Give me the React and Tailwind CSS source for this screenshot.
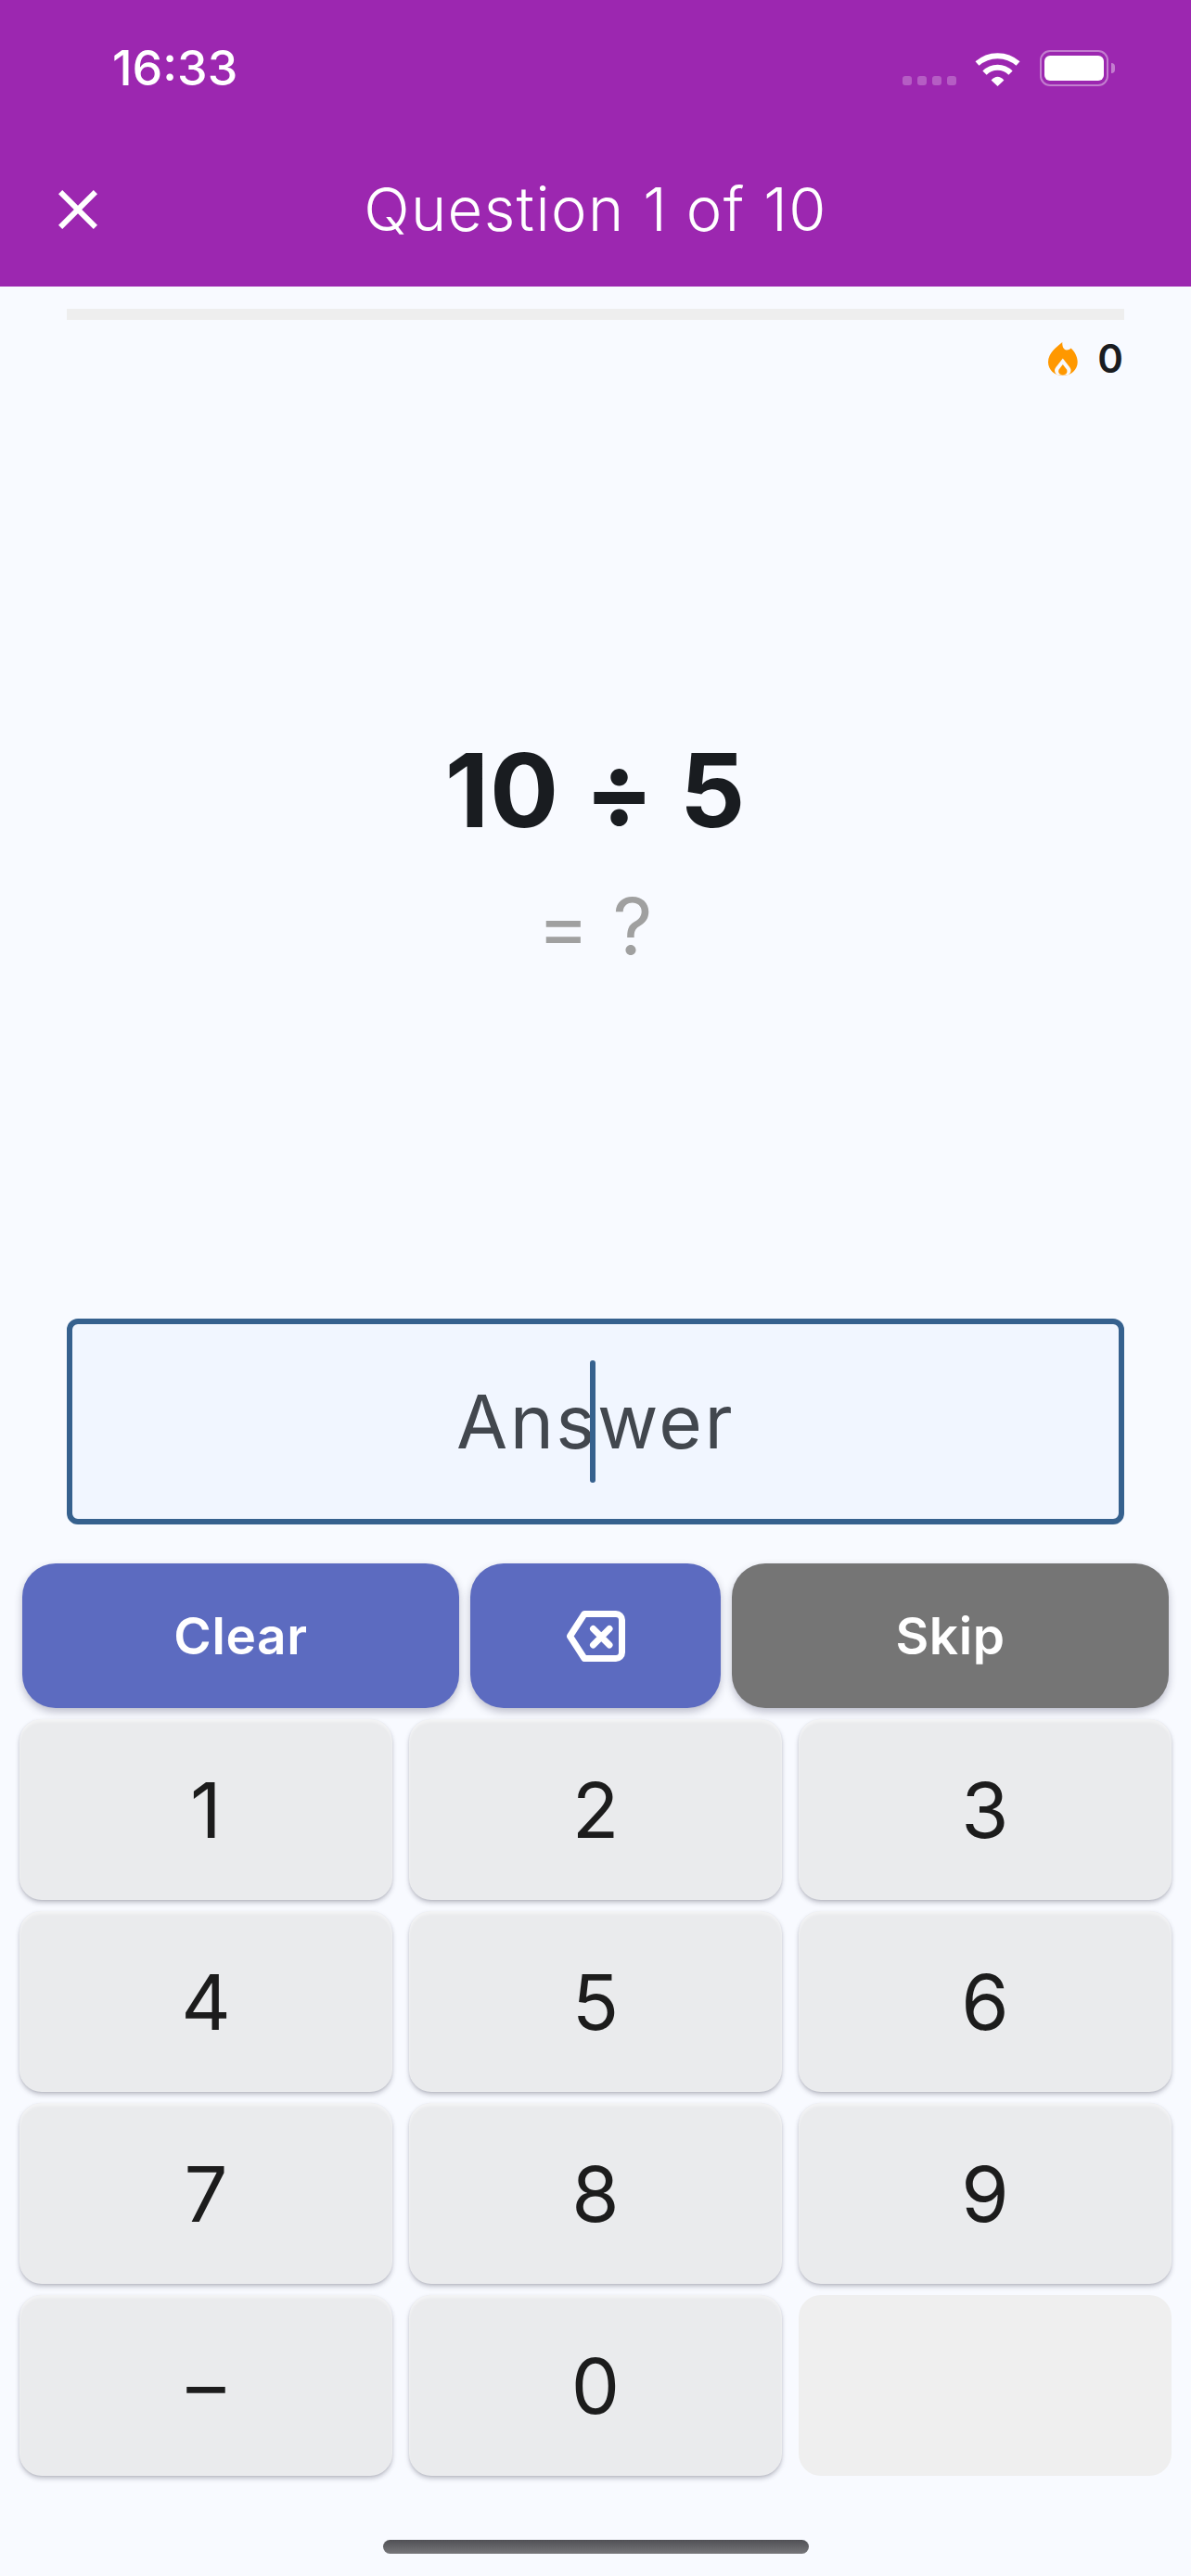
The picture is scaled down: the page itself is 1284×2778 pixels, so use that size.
const font = "font-['Inter',sans-serif]";

function CloseIcon() {
  return (
    <svg width="42" height="42" viewBox="0 0 42 42" fill="#fff">
      <path d="M42 4.2 37.8 0 21 16.8 4.2 0 0 4.2 16.8 21 0 37.8 4.2 42 21 25.2 37.8 42 42 37.8 25.2 21Z" />
    </svg>
  );
}

function WifiIcon() {
  return (
    <svg width="49" height="36" viewBox="0 0 49 36" fill="none" stroke="#fff" strokeWidth="6">
      <path d="M2.5 11.6A33 33 0 0 1 46.5 11.6" />
      <path d="M10.5 21.6A19.5 19.5 0 0 1 38.5 21.6" />
      <path d="M17.6 29.5Q24.5 22 31.4 29.5L24.5 36Z" fill="#fff" stroke="none" />
    </svg>
  );
}

function FlameIcon() {
  return (
    <svg width="32" height="36" viewBox="0 0 32 36">
      <path
        d="M15.3 0C15 3 16 8.5 20 8.5 22 8.5 23.5 7.5 24.5 6.5 29 10.5 31.7 16 31.7 21.5 31.7 30 24.5 36 15.8 36 7 36 0 30 0 21.5 0 12 9 5 15.3 0Z"
        fill="#FF9800"
      />
      <path
        d="M15.8 17.5 23.2 27C25.6 30.2 24.5 33.2 21.5 35.5L10 35.5C7 33.2 6 30.2 8.4 27Z"
        fill="#F8FAFF"
      />
      <path
        d="M15.8 24 19.8 29.2C21.6 32.2 19.5 35.2 15.8 35.2 12.1 35.2 10 32.2 11.8 29.2Z"
        fill="#FF9800"
      />
    </svg>
  );
}

function BackspaceIcon() {
  return (
    <svg width="63" height="55" viewBox="0 0 63 55" fill="none" stroke="#fff" strokeWidth="7" strokeLinecap="round" strokeLinejoin="round">
      <path d="M19 3.5H53A6.5 6.5 0 0 1 59.5 10V45A6.5 6.5 0 0 1 53 51.5H19L3.5 27.5Z" />
      <path d="M28.5 19.5 46 37M46 19.5 28.5 37" />
    </svg>
  );
}

function Key({ label, disabled }) {
  if (disabled) {
    return <div className="h-[195px] rounded-[24px] bg-[#EFEFEF]" />;
  }
  return (
    <div className="flex h-[195px] items-center justify-center rounded-[24px] bg-[#EAEBED] pt-[2px] text-[83px] leading-none text-[#1C1C1C] shadow-[0_3px_5px_rgba(60,60,80,0.28),0_1px_2px_rgba(60,60,80,0.1),inset_0_3px_3px_rgba(255,255,255,0.45)]">
      {label}
    </div>
  );
}

export default function App() {
  const keys = ["1", "2", "3", "4", "5", "6", "7", "8", "9", "–", "0"];

  return (
    <div className={`${font} flex h-[2778px] w-[1284px] flex-col overflow-hidden bg-[#F8FAFF]`}>
      <header className="flex h-[309px] flex-col bg-[#9C27B0] text-white">
        <div className="flex h-[146px] items-center justify-between pl-[121px] pr-[82px]">
          <span className="pt-[2px] text-[52px] leading-none font-medium">16:33</span>
          <div className="flex items-end">
            <div className="mr-[20px] mb-[1px] flex gap-[6px]">
              {[0, 1, 2, 3].map((i) => (
                <span key={i} className="h-[10px] w-[10px] rounded-[3px] bg-white/25" />
              ))}
            </div>
            <WifiIcon />
            <div className="ml-[21px] flex h-[39px] w-[74px] items-center justify-center rounded-[11px] border-[2.5px] border-white/40">
              <span className="h-[27px] w-[64px] rounded-[6px] bg-white" />
            </div>
            <span className="mb-[14px] ml-[3px] h-[11px] w-[4px] rounded-r-full bg-white/40" />
          </div>
        </div>
        <div className="grid flex-1 grid-cols-[1fr_auto_1fr] items-center pb-[4px] pl-[63px]">
          <CloseIcon />
          <h1 className="-ml-[63px] text-[65px] leading-none font-light tracking-[1.4px]">Question 1 of 10</h1>
          <span />
        </div>
      </header>

      <div className="mx-[72px] mt-[24px] h-[12px] bg-[#EEEEEE]" />

      <div className="mt-[21px] flex items-center justify-end gap-[21px] pr-[73px]">
        <FlameIcon />
        <span className="text-[42px] leading-none font-semibold text-[#1A1C20]">0</span>
      </div>

      <div className="flex flex-1 flex-col items-center justify-center gap-[50px] pt-[8px]">
        <div className="text-[110px] leading-none font-bold tracking-[1px] text-[#191C20]">10 ÷ 5</div>
        <div className="text-[84px] leading-none tracking-[1px] text-[#A0A0A0]">= ?</div>
      </div>

      <div className="relative mx-[72px] flex h-[222px] items-center justify-center rounded-[12px] border-[6px] border-[#36618E] bg-[#F1F6FF] text-[80px] leading-none tracking-[2.4px] text-[#42474E]">
        Answer
        <span className="absolute top-[39px] left-[558px] h-[132px] w-[6px] rounded-full bg-[#36618E]" />
      </div>

      <div className="mt-[42px] grid grid-cols-[1fr_270px_1fr] gap-[12px] px-[24px]">
        <div className="flex h-[156px] items-center justify-center rounded-[36px] bg-[#5C6BC0] text-[55px] font-semibold tracking-[0.6px] text-white shadow-[0_4px_8px_rgba(50,50,80,0.3)]">
          Clear
        </div>
        <div className="flex h-[156px] items-center justify-center rounded-[36px] bg-[#5C6BC0] shadow-[0_4px_8px_rgba(50,50,80,0.3)]">
          <BackspaceIcon />
        </div>
        <div className="flex h-[156px] items-center justify-center rounded-[36px] bg-[#757575] text-[55px] font-semibold tracking-[0.6px] text-white shadow-[0_4px_8px_rgba(50,50,80,0.3)]">
          Skip
        </div>
      </div>

      <div className="mt-[12px] grid grid-cols-3 gap-x-[18px] gap-y-[12px] px-[21px]">
        {keys.map((k) => (
          <Key key={k} label={k} />
        ))}
        <Key disabled />
      </div>

      <div className="mx-auto mt-[69px] mb-[24px] h-[15px] w-[459px] rounded-full bg-linear-to-b from-[#505055] to-[#77777A]" />
    </div>
  );
}
